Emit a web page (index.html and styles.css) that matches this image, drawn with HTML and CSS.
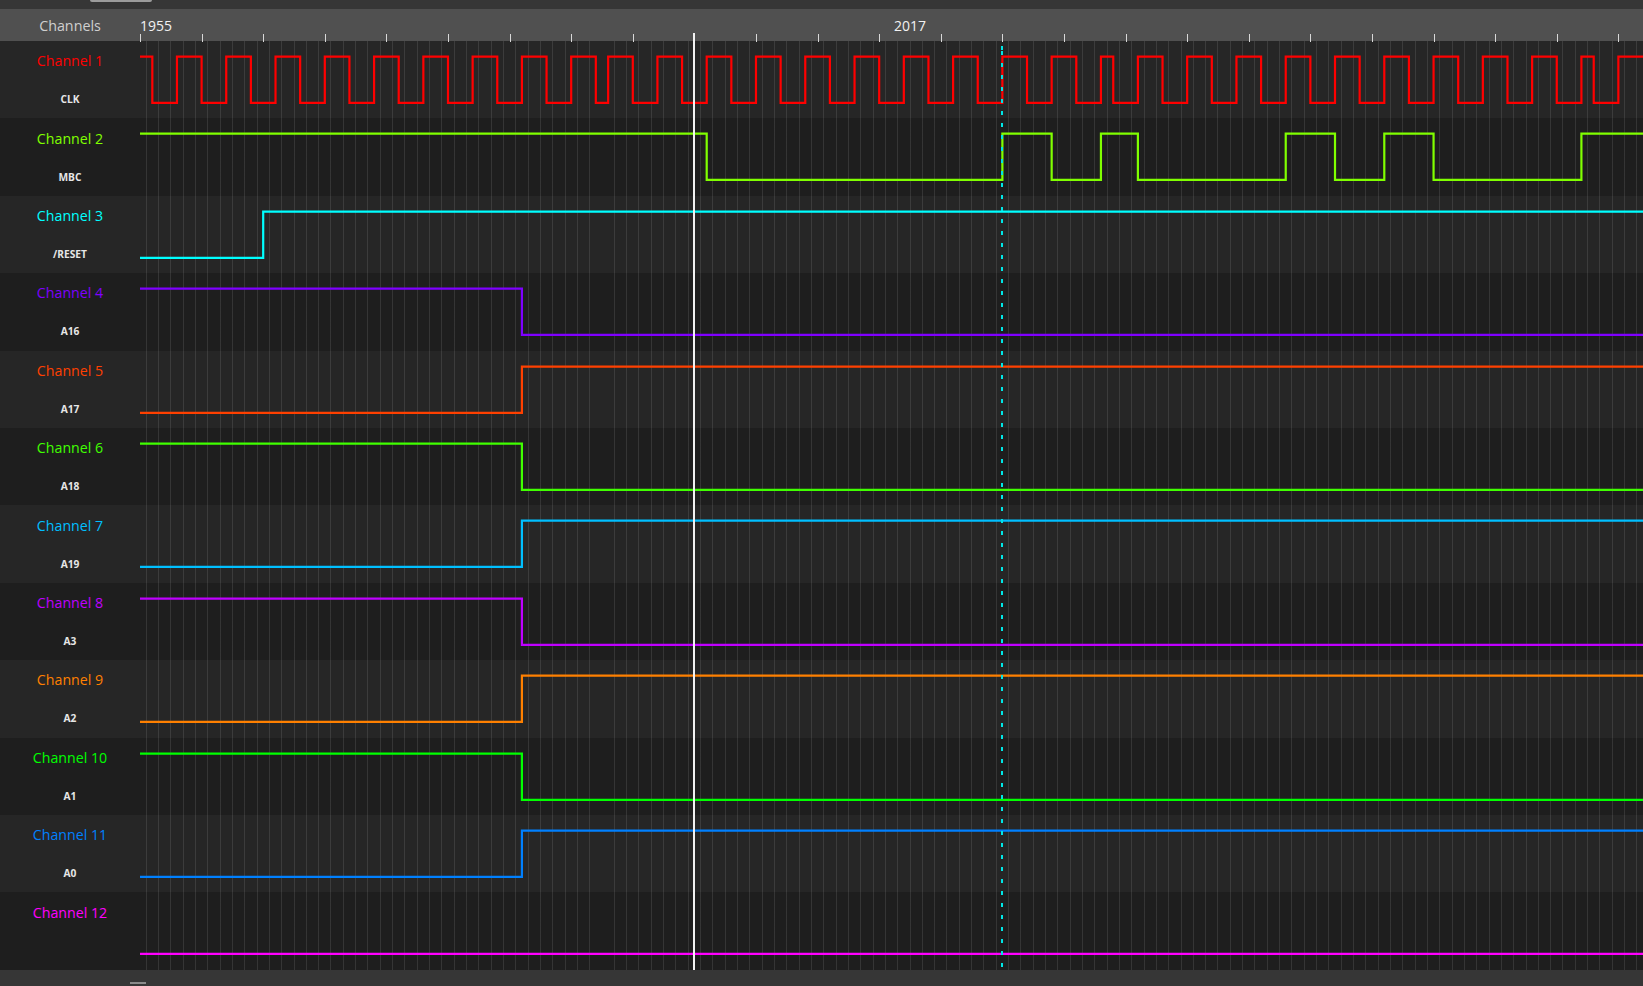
FILE: index.html
```html
<!DOCTYPE html>
<html lang="en">
<head>
<meta charset="utf-8">
<title>Channels</title>
<link rel="stylesheet" href="styles.css">
</head>
<body>
<div class="app">
  <div class="topbar"><div class="tab"></div></div>
  <div class="header">
    <div class="hcell">Channels</div>
    <div class="ruler">
      <span class="year year-start">1955</span>
      <span class="year year-mid">2017</span>
    </div>
  </div>
  <div class="rows">
    <div class="row odd c1">
      <div class="label"><div class="name">Channel 1</div><div class="sub">CLK</div></div>
      <div class="track"><svg class="sig" viewBox="0 0 122 77.42" preserveAspectRatio="none"><path d="M0 15.6 H1 V61.8 H3 V15.6 H5 V61.8 H7 V15.6 H9 V61.8 H11 V15.6 H13 V61.8 H15 V15.6 H17 V61.8 H19 V15.6 H21 V61.8 H23 V15.6 H25 V61.8 H27 V15.6 H29 V61.8 H31 V15.6 H33 V61.8 H35 V15.6 H37 V61.8 H38 V15.6 H40 V61.8 H42 V15.6 H44 V61.8 H46 V15.6 H48 V61.8 H50 V15.6 H52 V61.8 H54 V15.6 H56 V61.8 H58 V15.6 H60 V61.8 H62 V15.6 H64 V61.8 H66 V15.6 H68 V61.8 H70 V15.6 H72 V61.8 H74 V15.6 H76 V61.8 H78 V15.6 H79 V61.8 H81 V15.6 H83 V61.8 H85 V15.6 H87 V61.8 H89 V15.6 H91 V61.8 H93 V15.6 H95 V61.8 H97 V15.6 H99 V61.8 H101 V15.6 H103 V61.8 H105 V15.6 H107 V61.8 H109 V15.6 H111 V61.8 H113 V15.6 H115 V61.8 H117 V15.6 H118 V61.8 H120 V15.6 H122"/></svg></div>
    </div>
    <div class="row even c2">
      <div class="label"><div class="name">Channel 2</div><div class="sub">MBC</div></div>
      <div class="track"><svg class="sig" viewBox="0 0 122 77.42" preserveAspectRatio="none"><path d="M0 15.6 H46 V61.8 H70 V15.6 H74 V61.8 H78 V15.6 H81 V61.8 H93 V15.6 H97 V61.8 H101 V15.6 H105 V61.8 H117 V15.6 H122"/></svg></div>
    </div>
    <div class="row odd c3">
      <div class="label"><div class="name">Channel 3</div><div class="sub">/RESET</div></div>
      <div class="track"><svg class="sig" viewBox="0 0 122 77.42" preserveAspectRatio="none"><path d="M0 61.8 H10 V15.6 H122"/></svg></div>
    </div>
    <div class="row even c4">
      <div class="label"><div class="name">Channel 4</div><div class="sub">A16</div></div>
      <div class="track"><svg class="sig" viewBox="0 0 122 77.42" preserveAspectRatio="none"><path d="M0 15.6 H31 V61.8 H122"/></svg></div>
    </div>
    <div class="row odd c5">
      <div class="label"><div class="name">Channel 5</div><div class="sub">A17</div></div>
      <div class="track"><svg class="sig" viewBox="0 0 122 77.42" preserveAspectRatio="none"><path d="M0 61.8 H31 V15.6 H122"/></svg></div>
    </div>
    <div class="row even c6">
      <div class="label"><div class="name">Channel 6</div><div class="sub">A18</div></div>
      <div class="track"><svg class="sig" viewBox="0 0 122 77.42" preserveAspectRatio="none"><path d="M0 15.6 H31 V61.8 H122"/></svg></div>
    </div>
    <div class="row odd c7">
      <div class="label"><div class="name">Channel 7</div><div class="sub">A19</div></div>
      <div class="track"><svg class="sig" viewBox="0 0 122 77.42" preserveAspectRatio="none"><path d="M0 61.8 H31 V15.6 H122"/></svg></div>
    </div>
    <div class="row even c8">
      <div class="label"><div class="name">Channel 8</div><div class="sub">A3</div></div>
      <div class="track"><svg class="sig" viewBox="0 0 122 77.42" preserveAspectRatio="none"><path d="M0 15.6 H31 V61.8 H122"/></svg></div>
    </div>
    <div class="row odd c9">
      <div class="label"><div class="name">Channel 9</div><div class="sub">A2</div></div>
      <div class="track"><svg class="sig" viewBox="0 0 122 77.42" preserveAspectRatio="none"><path d="M0 61.8 H31 V15.6 H122"/></svg></div>
    </div>
    <div class="row even c10">
      <div class="label"><div class="name">Channel 10</div><div class="sub">A1</div></div>
      <div class="track"><svg class="sig" viewBox="0 0 122 77.42" preserveAspectRatio="none"><path d="M0 15.6 H31 V61.8 H122"/></svg></div>
    </div>
    <div class="row odd c11">
      <div class="label"><div class="name">Channel 11</div><div class="sub">A0</div></div>
      <div class="track"><svg class="sig" viewBox="0 0 122 77.42" preserveAspectRatio="none"><path d="M0 61.8 H31 V15.6 H122"/></svg></div>
    </div>
    <div class="row even c12">
      <div class="label"><div class="name">Channel 12</div><div class="sub"></div></div>
      <div class="track"><svg class="sig" viewBox="0 0 122 77.42" preserveAspectRatio="none"><path d="M0 61.8 H122"/></svg></div>
    </div>
  </div>
  <div class="bottombar"><div class="handle"></div></div>
  <div class="cursor"></div>
  <div class="marker"></div>
</div>
</body>
</html>
```
FILE: styles.css
```css
html, body {
  margin: 0;
  padding: 0;
  background: #1e1e1e;
  overflow: hidden;
}

.app {
  position: relative;
  width: 1643px;
  height: 986px;
  display: flex;
  flex-direction: column;
  font-family: "Open Sans", "Noto Sans", sans-serif;
  overflow: hidden;
}

.topbar {
  height: 9px;
  background: #363636;
  flex: none;
}

.tab {
  margin-left: 90px;
  width: 62px;
  height: 1.5px;
  background: #9c9c9c;
  border-radius: 0 0 2px 2px;
}

.header {
  height: 32px;
  flex: none;
  display: grid;
  grid-template-columns: 140px 1fr;
  background: #505050;
}

.hcell {
  text-align: center;
  font-size: 14.3px;
  line-height: 33px;
  color: #cfcfcf;
}

.ruler {
  position: relative;
  background-image: repeating-linear-gradient(90deg, #d8d8d8 0, #d8d8d8 1px, transparent 1px, transparent 61.6px);
  background-size: 100% 8px;
  background-repeat: no-repeat;
  background-position: left bottom;
}

.year {
  position: absolute;
  top: 0;
  font-size: 14px;
  line-height: 33px;
  color: #f2f2f2;
}

.year-start { left: 0; }
.year-mid { left: 754px; }

.rows {
  flex: none;
  height: 929px;
  display: flex;
  flex-direction: column;
}

.row {
  flex: none;
  height: 77.4167px;
  display: grid;
  grid-template-columns: 140px 1fr;
  overflow: hidden;
}

.row.odd { background: #262626; }
.row.even { background: #1e1e1e; }

.label {
  display: flex;
  flex-direction: column;
  align-items: center;
  padding-top: 10.2px;
}

.name {
  font-size: 14.2px;
  line-height: 20px;
}

.sub {
  margin-top: 22px;
  font-size: 10.2px;
  font-weight: 700;
  line-height: 12px;
  color: #e6e6e6;
}

.track {
  background-image: repeating-linear-gradient(90deg,
    transparent 0, transparent 5.66px,
    rgba(255, 255, 255, 0.1) 5.66px, rgba(255, 255, 255, 0.1) 6.66px,
    transparent 6.66px, transparent 12.32px);
}

.sig {
  display: block;
  width: 1503px;
  height: 77.4167px;
  overflow: visible;
}

.sig path {
  fill: none;
  stroke: currentColor;
  stroke-width: 2.2px;
  vector-effect: non-scaling-stroke;
  stroke-linejoin: miter;
}

.c1 { color: #ff0000; }
.c2 { color: #80ff00; }
.c3 { color: #00ffff; }
.c4 { color: #7f00ff; }
.c5 { color: #ff4000; }
.c6 { color: #40ff00; }
.c7 { color: #00bfff; }
.c8 { color: #bf00ff; }
.c9 { color: #ff8000; }
.c10 { color: #00ff00; }
.c11 { color: #0080ff; }
.c12 { color: #ff00ff; }

.bottombar {
  height: 16px;
  flex: none;
  background: #363636;
}

.handle {
  margin: 12px 0 0 130px;
  width: 16px;
  height: 2px;
  background: #8a8a8a;
}

.cursor {
  position: absolute;
  left: 693px;
  top: 33px;
  bottom: 16px;
  width: 2px;
  background: #f2f2f2;
}

.marker {
  position: absolute;
  left: 1001px;
  top: 41px;
  bottom: 16px;
  width: 2px;
  background-image: repeating-linear-gradient(180deg, #00e6e6 0, #00e6e6 4px, transparent 4px, transparent 12px);
  background-position: 0 10px;
}
```
